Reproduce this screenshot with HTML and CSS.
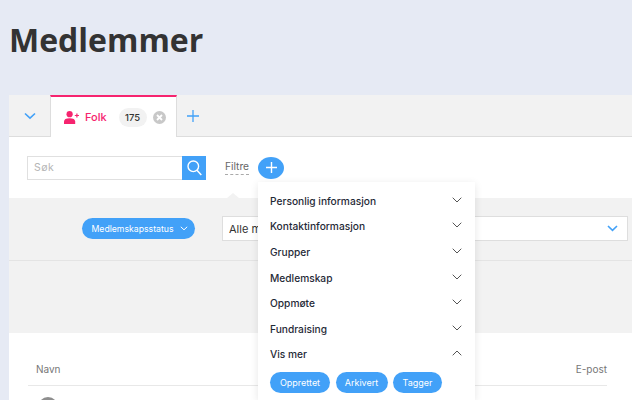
FILE: index.html
```html
<!DOCTYPE html>
<html lang="no">
<head>
<meta charset="utf-8">
<title>Medlemmer</title>
<link rel="stylesheet" href="styles.css">
</head>
<body>
<h1 class="title">Medlemmer</h1>
<main class="card">
  <div class="tabs">
    <div class="tab-toggle">
      <svg width="12" height="8" viewBox="0 0 12 8"><path d="M1 1.500 6 6.200 11 1.500" fill="none" stroke="#42a1f8" stroke-width="1.600"/></svg>
    </div>
    <div class="tab">
      <svg class="tab-icon" width="15" height="13" viewBox="0 0 15 13"><circle cx="5.600" cy="3.200" r="3.100" fill="#f6246f"/><path d="M0 13V10.600C0 8.300 2 7.200 5.600 7.200S11.200 8.300 11.200 10.600V13Z" fill="#f6246f"/><path d="M10.800 4.500H15M12.900 2.400V6.600" stroke="#f6246f" stroke-width="1.200" fill="none"/></svg>
      <span class="tab-name">Folk</span>
      <span class="count">175</span>
      <span class="close"><svg width="7" height="7" viewBox="0 0 7 7"><path d="M1 1 6 6M6 1 1 6" stroke="#fff" stroke-width="1.800"/></svg></span>
    </div>
    <div class="tab-add">
      <svg width="12" height="12" viewBox="0 0 12 12"><path d="M6 0V12M0 6H12" stroke="#42a1f8" stroke-width="1.300"/></svg>
    </div>
  </div>
  <div class="toolbar">
    <div class="search">
      <span class="search-input">Søk</span>
      <span class="search-btn"><svg width="15" height="16" viewBox="0 0 15 16"><circle cx="6.300" cy="6.300" r="5.300" fill="none" stroke="#fff" stroke-width="1.400"/><path d="M10 10.300 14.300 15" stroke="#fff" stroke-width="1.500"/></svg></span>
    </div>
    <span class="filter-label">Filtre</span>
    <span class="filter-add"><svg width="11" height="11" viewBox="0 0 11 11"><path d="M5.500 0V11M0 5.500H11" stroke="#fff" stroke-width="1.400"/></svg></span>
  </div>
  <section class="filters">
    <span class="notch"></span>
    <div class="filter-row">
      <span class="pill status">Medlemskapsstatus <svg width="8" height="5" viewBox="0 0 8 5"><path d="M.8.8 4 3.800 7.200.8" fill="none" stroke="#fff" stroke-width="1"/></svg></span>
      <div class="select">
        <span>Alle medlemmer</span>
        <svg width="11" height="7" viewBox="0 0 11 7"><path d="M1 1 5.500 5.400 10 1" fill="none" stroke="#42a1f8" stroke-width="1.600"/></svg>
      </div>
    </div>
  </section>
  <div class="table-head">
    <span>Navn</span>
    <span class="email">E-post</span>
  </div>
  <div class="table-row"><span class="avatar"></span></div>

  <div class="popover">
    <div class="menu-row"><span>Personlig informasjon</span><svg class="chev" width="10" height="6" viewBox="0 0 10 6"><path d="M.7.7 5 5 9.300.7"/></svg></div>
    <div class="menu-row"><span>Kontaktinformasjon</span><svg class="chev" width="10" height="6" viewBox="0 0 10 6"><path d="M.7.7 5 5 9.300.7"/></svg></div>
    <div class="menu-row"><span>Grupper</span><svg class="chev" width="10" height="6" viewBox="0 0 10 6"><path d="M.7.7 5 5 9.300.7"/></svg></div>
    <div class="menu-row"><span>Medlemskap</span><svg class="chev" width="10" height="6" viewBox="0 0 10 6"><path d="M.7.7 5 5 9.300.7"/></svg></div>
    <div class="menu-row"><span>Oppmøte</span><svg class="chev" width="10" height="6" viewBox="0 0 10 6"><path d="M.7.7 5 5 9.300.7"/></svg></div>
    <div class="menu-row"><span>Fundraising</span><svg class="chev" width="10" height="6" viewBox="0 0 10 6"><path d="M.7.7 5 5 9.300.7"/></svg></div>
    <div class="menu-row"><span>Vis mer</span><svg class="chev" width="10" height="6" viewBox="0 0 10 6"><path d="M.7 5.300 5 1 9.300 5.300"/></svg></div>
    <div class="pills">
      <span class="pill">Opprettet</span>
      <span class="pill">Arkivert</span>
      <span class="pill">Tagger</span>
    </div>
  </div>
</main>
</body>
</html>
```
FILE: styles.css
```css
* { box-sizing: border-box; }
body {
  margin: 0;
  height: 400px;
  overflow: hidden;
  background: #e6eaf4;
  font-family: "Inter", "Liberation Sans", sans-serif;
  color: #1f2a37;
}
.title {
  margin: 0;
  padding: 18px 0 0 9px;
  height: 95px;
  font-family: "Open Sans", sans-serif;
  font-size: 32px;
  line-height: 44px;
  font-weight: 700;
  color: #333;
}
.card {
  position: relative;
  margin-left: 9px;
  height: 305px;
  overflow: hidden;
  background: #fff;
}
.tabs {
  display: flex;
  height: 42px;
  background: #f2f2f2;
  border-bottom: 1px solid #ddd;
}
.tab-toggle {
  width: 41px;
  display: flex;
  align-items: center;
  justify-content: center;
}
.tab {
  width: 127px;
  height: 42px;
  background: #fff;
  border-top: 2px solid #f6246f;
  border-left: 1px solid #ddd;
  border-right: 1px solid #ddd;
  display: flex;
  align-items: center;
  padding-left: 13px;
}
.tab-name {
  margin-left: 6px;
  font-size: 11px;
  font-weight: 500;
  color: #f6246f;
}
.count {
  margin-left: 12px;
  width: 28px;
  height: 19px;
  border-radius: 10px;
  background: #f2f2f2;
  color: #333;
  font-size: 9.500px;
  font-weight: 500;
  display: flex;
  align-items: center;
  justify-content: center;
}
.close {
  margin-left: 6px;
  width: 13px;
  height: 13px;
  border-radius: 50%;
  background: #c8c8c8;
  display: flex;
  align-items: center;
  justify-content: center;
}
.tab-add {
  width: 32px;
  display: flex;
  align-items: center;
  justify-content: center;
}
.toolbar {
  height: 61px;
  display: flex;
  align-items: center;
  padding-left: 18px;
}
.search {
  display: flex;
  width: 179px;
  height: 24px;
}
.search-input {
  flex: 1;
  border: 1px solid #e0e0e0;
  border-right: 0;
  font-size: 10.500px;
  line-height: 22px;
  padding-left: 6px;
  color: #b5b5b5;
  letter-spacing: .5px;
}
.search-btn {
  width: 24px;
  background: #42a1f8;
  display: flex;
  align-items: center;
  justify-content: center;
}
.filter-label {
  margin-left: 19px;
  font-size: 10.200px;
  color: #666;
  border-bottom: 1px dashed #aaa;
  line-height: 13px;
  padding-bottom: 1px;
}
.filter-add {
  margin-left: 9px;
  width: 26px;
  height: 22px;
  border-radius: 50%;
  background: #42a1f8;
  display: flex;
  align-items: center;
  justify-content: center;
}
.filters {
  position: relative;
  height: 135px;
  background: #f2f2f2;
}
.notch {
  position: absolute;
  left: 218px;
  top: -5px;
  border-left: 6px solid transparent;
  border-right: 6px solid transparent;
  border-bottom: 5px solid #f2f2f2;
}
.filter-row {
  height: 63px;
  border-bottom: 1px solid #e4e4e4;
  display: flex;
  align-items: center;
  padding: 0 0 1px 73px;
}
.pill {
  display: inline-flex;
  align-items: center;
  justify-content: center;
  gap: 6px;
  height: 21px;
  border-radius: 11px;
  background: #42a1f8;
  color: #fff;
  font-size: 9px;
  font-weight: 400;
}
.status {
  width: 113px;
  font-size: 8.700px;
  padding-left: 2px;
}
.select {
  margin-left: 27px;
  width: 406px;
  height: 25px;
  background: #fff;
  border: 1px solid #dedede;
  display: flex;
  align-items: center;
  justify-content: space-between;
  padding: 0 9px 0 6px;
  font-size: 11px;
  color: #333;
}
.table-head {
  margin: 0 25px 0 19px;
  height: 53px;
  border-bottom: 1px solid #e8e8e8;
  display: flex;
  align-items: center;
  justify-content: space-between;
  padding: 20px 0 0 8px;
  font-size: 10px;
  color: #777;
}
.email {
  white-space: nowrap;
}
.table-row {
  padding: 11px 0 0 29px;
}
.avatar {
  display: block;
  width: 20px;
  height: 20px;
  border-radius: 50%;
  background: #8e8e8e;
}
.popover {
  position: absolute;
  left: 249px;
  top: 87px;
  width: 217px;
  height: 218px;
  background: #fff;
  box-shadow: 0 2px 8px rgba(0, 0, 0, .1);
  padding: 6px 13px 0 12px;
}
.menu-row {
  height: 25.600px;
  display: flex;
  align-items: center;
  justify-content: space-between;
  font-size: 10.200px;
  font-weight: 500;
  color: #1f2a37;
}
.chev {
  margin-top: -2px;
  fill: none;
  stroke: #555;
  stroke-width: 1;
}
.pills {
  display: flex;
  gap: 5.500px;
  margin-top: 5px;
}
.pills .pill {
  width: 52px;
}
.pills .pill:first-child { width: 60px; }
.pills .pill:last-child { width: 49px; }
```
